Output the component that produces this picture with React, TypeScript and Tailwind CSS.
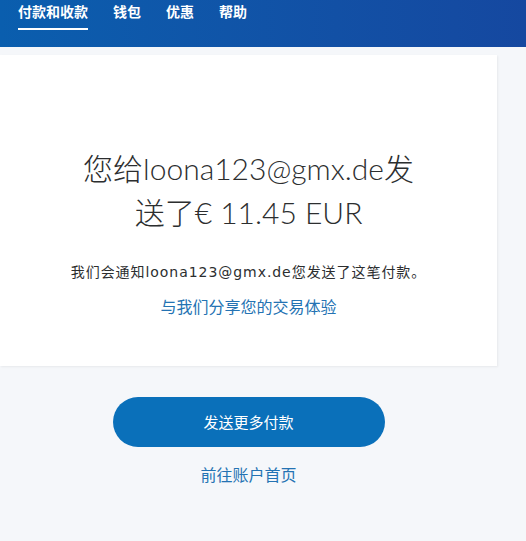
export default function App() {
  const tabs = ['付款和收款', '钱包', '优惠', '帮助'];
  const font = { fontFamily: '"Open Sans", "Noto Sans CJK SC", sans-serif' };

  return (
    <div className="w-[526px] h-[541px] bg-[#f5f7fa] overflow-hidden" style={font}>
      {/* top nav */}
      <div className="h-[47px] bg-gradient-to-r from-[#0a5eae] to-[#1548a0] flex items-start px-[18px] pt-[3px] gap-[25px]">
        {tabs.map((t, i) => (
          <div key={t} className="flex flex-col">
            <span className="text-white text-[14px] font-bold leading-[18px]">{t}</span>
            {i === 0 && <span className="mt-[7px] h-[2px] bg-white w-full" />}
          </div>
        ))}
      </div>

      {/* result card */}
      <div className="mt-[8px] w-[497px] h-[311px] bg-white shadow-[1px_1px_2px_rgba(0,0,0,0.06)] flex flex-col items-center pt-[91px]">
        <h1 className="font-['Lato','Noto_Sans_CJK_SC',sans-serif] text-[30px] font-light text-[#2c2e2f] leading-[44px] text-center w-[345px]">
          您给loona123@gmx.de发送了€ 11.45 EUR
        </h1>
        <p className="mt-[28px] font-['DejaVu_Sans','Noto_Sans_CJK_SC',sans-serif] text-[14px] tracking-[0.95px] text-[#2c2e2f] leading-[20px]">
          我们会通知loona123@gmx.de您发送了这笔付款。
        </p>
        <a className="mt-[14px] text-[16px] text-[#2473b3] leading-[22px]">与我们分享您的交易体验</a>
      </div>

      {/* actions */}
      <div className="flex flex-col items-center pt-[31px] w-[497px]">
        <button className="w-[272px] h-[50px] rounded-full bg-[#0a70ba] text-white text-[15px] leading-none">
          发送更多付款
        </button>
        <a className="mt-[17px] text-[16px] text-[#2473b3] leading-[22px]">前往账户首页</a>
      </div>
    </div>
  );
}
